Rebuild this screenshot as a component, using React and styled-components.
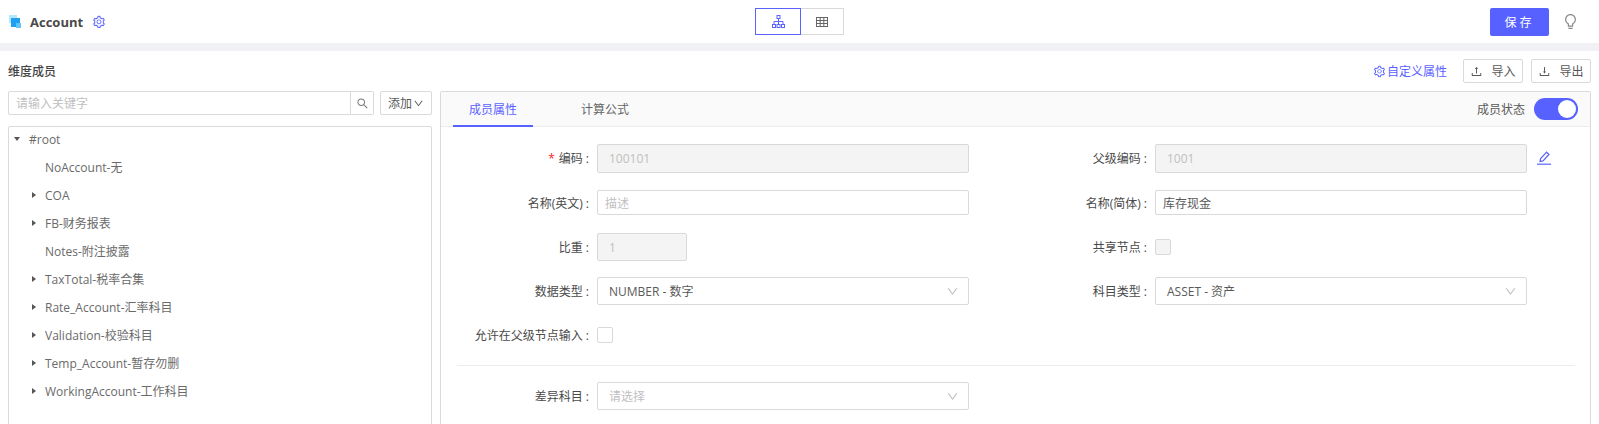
import styled, { createGlobalStyle } from "styled-components";
import { AiOutlineSetting, AiOutlineSearch, AiOutlineUpload, AiOutlineDownload, AiOutlineBulb, AiOutlineDown } from "react-icons/ai";

const GlobalStyle = createGlobalStyle`
  html, body {
    margin: 0;
    height: 100%;
    overflow: hidden;
    background: #fff;
    font-family: "Open Sans", "Noto Sans CJK SC", sans-serif;
    font-size: 12px;
    color: #595959;
  }
  * { box-sizing: border-box; }
`;

const TopBar = styled.header`
  height: 43px;
  display: grid;
  grid-template-columns: 1fr auto 1fr;
  align-items: center;
`;

const TitleBox = styled.div`
  display: flex;
  align-items: center;
  padding-left: 9px;
  > strong {
    margin: 0 9px 0 9px;
    font-size: 13px;
    font-weight: 700;
    color: #4a4a4a;
  }
  > svg:last-child {
    color: #5a62ff;
    font-size: 14px;
  }
`;

const ViewSwitch = styled.div`
  display: flex;
`;

const ViewButton = styled.div`
  width: ${(props) => (props.$active ? "46px" : "43px")};
  height: 27px;
  display: flex;
  align-items: center;
  justify-content: center;
  border: 1px solid ${(props) => (props.$active ? "#5a62ff" : "#d9d9d9")};
  border-left-width: ${(props) => (props.$active ? "1px" : "0")};
  color: ${(props) => (props.$active ? "#5a62ff" : "#666")};
`;

const TopActions = styled.div`
  display: flex;
  align-items: center;
  justify-content: flex-end;
  gap: 13px;
  padding-right: 20px;
  > svg {
    font-size: 17px;
    color: #888;
  }
`;

const SaveButton = styled.button`
  width: 59px;
  height: 28px;
  border: none;
  border-radius: 2px;
  background: #5661ff;
  color: #fff;
  font-family: inherit;
  font-size: 12px;
  letter-spacing: 3px;
`;

const Band = styled.div`
  height: 8px;
  background: #f0f1f5;
`;

const Content = styled.main`
  padding: 8px 8px 0;
`;

const SectionBar = styled.div`
  height: 24px;
  display: flex;
  align-items: center;
  justify-content: space-between;
`;

const SectionTitle = styled.h3`
  margin: 0;
  font-size: 12px;
  font-weight: 500;
  color: #444;
`;

const SectionActions = styled.div`
  display: flex;
  align-items: center;
  gap: 8px;
`;

const CustomLink = styled.a`
  display: flex;
  align-items: center;
  gap: 1px;
  margin-right: 8px;
  color: #5a62ff;
  font-size: 12px;
`;

const OutlineButton = styled.div`
  width: 60px;
  height: 24px;
  display: flex;
  align-items: center;
  justify-content: center;
  gap: 8px;
  border: 1px solid #d9d9d9;
  border-radius: 2px;
  font-size: 12px;
  color: #595959;
`;

const Columns = styled.div`
  display: grid;
  grid-template-columns: 424px minmax(0, 1fr);
  gap: 8px;
  margin-top: 8px;
`;

const LeftColumn = styled.section`
  display: flex;
  flex-direction: column;
  gap: 11px;
`;

const SearchRow = styled.div`
  display: flex;
  align-items: stretch;
  height: 24px;
`;

const SearchInput = styled.div`
  width: 343px;
  display: flex;
  align-items: center;
  padding-left: 7px;
  border: 1px solid #d9d9d9;
  border-radius: 2px 0 0 2px;
  color: #bfbfbf;
`;

const SearchButton = styled.div`
  width: 23px;
  display: flex;
  align-items: center;
  justify-content: center;
  border: 1px solid #d9d9d9;
  border-left: none;
  border-radius: 0 2px 2px 0;
  color: #777;
  font-size: 13px;
`;

const AddButton = styled.div`
  width: 52px;
  margin-left: 6px;
  display: flex;
  align-items: center;
  justify-content: center;
  gap: 1px;
  border: 1px solid #d9d9d9;
  border-radius: 2px;
`;

const TreeBox = styled.div`
  height: 340px;
  border: 1px solid #d9d9d9;
  border-radius: 2px;
`;

const TreeRow = styled.div`
  height: 28px;
  display: flex;
  align-items: center;
  padding-left: ${(props) => (props.$root ? "5px" : "22px")};
  padding-bottom: 4px;
  color: #6a6a6a;
`;

const Caret = styled.span`
  width: ${(props) => (props.$open ? "15px" : "14px")};
  height: 8px;
  flex: none;
  display: flex;
  align-items: center;
  justify-content: flex-start;
  &::before {
    content: "";
    display: ${(props) => (props.$none ? "none" : "block")};
    width: 0;
    height: 0;
    margin-left: ${(props) => (props.$open ? "0" : "1px")};
    border-style: solid;
    border-color: transparent;
    ${(props) =>
      props.$open
        ? "border-width: 4px 3px 0 3px; border-top-color: #555;"
        : "border-width: 3px 0 3px 4px; border-left-color: #555;"}
  }
`;

const Panel = styled.section`
  height: 350px;
  border: 1px solid #d9d9d9;
  border-radius: 2px;
`;

const PanelHead = styled.div`
  height: 35px;
  display: flex;
  align-items: flex-end;
  justify-content: space-between;
  padding: 0 12px;
  background: #fafafa;
  border-bottom: 1px solid #ececec;
`;

const Tabs = styled.div`
  display: flex;
  gap: 32px;
  border-bottom: 1px solid #ececec;
  margin-bottom: -1px;
`;

const Tab = styled.div`
  height: 35px;
  display: flex;
  align-items: center;
  padding: 0 16px;
  margin-bottom: -1px;
  border-bottom: 2px solid ${(props) => (props.$active ? "#5661ff" : "transparent")};
  color: ${(props) => (props.$active ? "#5a62ff" : "#666")};
`;

const StatusBox = styled.div`
  height: 34px;
  display: flex;
  align-items: center;
  gap: 9px;
`;

const SwitchTrack = styled.div`
  width: 44px;
  height: 22px;
  display: flex;
  align-items: center;
  justify-content: flex-end;
  padding-right: 2px;
  border-radius: 11px;
  background: #5661ff;
  &::after {
    content: "";
    width: 18px;
    height: 18px;
    border-radius: 50%;
    background: #fff;
  }
`;

const FormBody = styled.div`
  padding-top: 9px;
`;

const FormRow = styled.div`
  height: ${(props) => props.$h || 44}px;
  display: grid;
  grid-template-columns: 148px 380px 178px 380px 1fr;
  align-items: center;
`;

const Label = styled.label`
  grid-column: ${(props) => props.$col || 1};
  text-align: right;
  white-space: nowrap;
  color: #4a4a4a;
  &::after {
    content: ":";
    margin-left: 3px;
  }
  > i {
    font-style: normal;
    color: #f5222d;
    margin-right: 4px;
  }
`;

const Control = styled.div`
  margin-left: 8px;
  width: ${(props) => props.$width || "auto"};
`;

const TextField = styled.div`
  height: ${(props) => props.$h || 25}px;
  display: flex;
  align-items: center;
  padding-left: ${(props) => (props.$disabled ? "11px" : "7px")};
  border: 1px solid #d9d9d9;
  border-radius: 2px;
  background: ${(props) => (props.$disabled ? "#f4f4f4" : "#fff")};
  color: ${(props) => (props.$muted ? "#bfbfbf" : "#595959")};
`;

const SelectField = styled.div`
  height: 28px;
  display: flex;
  align-items: center;
  justify-content: space-between;
  padding: 0 9px 0 11px;
  border: 1px solid #d9d9d9;
  border-radius: 2px;
  color: ${(props) => (props.$muted ? "#bfbfbf" : "#595959")};
  > svg {
    color: #bfbfbf;
    font-size: 13px;
  }
`;

const CheckBox = styled.div`
  width: 16px;
  height: 16px;
  border: 1px solid #d9d9d9;
  border-radius: 2px;
  background: ${(props) => (props.$disabled ? "#f4f4f4" : "#fff")};
`;

const EditIconBox = styled.div`
  display: flex;
  margin-left: 10px;
  color: #5a62ff;
`;

const Divider = styled.hr`
  margin: 8px 15px 8px 16px;
  border: none;
  border-top: 1px solid #ececec;
`;

const LogoIcon = () => (
  <svg width="12" height="13" viewBox="0 0 12 13">
    <rect x="0" y="0" width="8" height="8" fill="#b3e8fc" />
    <rect x="2" y="3" width="9" height="9" fill="#1f9ff0" />
    <rect x="7" y="8" width="5" height="5" fill="#5cc6fa" />
  </svg>
);

const TreeIcon = () => (
  <svg width="13" height="13" viewBox="0 0 13 13" fill="none" stroke="currentColor">
    <rect x="5" y="0.5" width="3" height="3" />
    <rect x="0.5" y="9.5" width="3" height="3" />
    <rect x="5" y="9.5" width="3" height="3" />
    <rect x="9.5" y="9.5" width="3" height="3" />
    <path d="M6.5 3.5V9.5M2 9.5V6.5H11V9.5" />
  </svg>
);

const TableIcon = () => (
  <svg width="12" height="10" viewBox="0 0 12 10" fill="none" stroke="currentColor">
    <rect x="0.5" y="0.5" width="11" height="9" />
    <path d="M4.2 0.5V9.5M7.8 0.5V9.5M0.5 3.5H11.5M0.5 6.5H11.5" />
  </svg>
);

const EditIcon = () => (
  <svg width="14" height="14" viewBox="0 0 14 14" fill="none" stroke="currentColor" strokeWidth="1.2">
    <path d="M3 10.5L3.6 7.6L9.6 1.2L12 3.5L6 9.9Z" />
    <path d="M0 13.2H14" />
  </svg>
);

const treeItems = [
  { text: "NoAccount-无" },
  { text: "COA", more: true },
  { text: "FB-财务报表", more: true },
  { text: "Notes-附注披露" },
  { text: "TaxTotal-税率合集", more: true },
  { text: "Rate_Account-汇率科目", more: true },
  { text: "Validation-校验科目", more: true },
  { text: "Temp_Account-暂存勿删", more: true },
  { text: "WorkingAccount-工作科目", more: true },
];

const App = () => (
  <>
    <GlobalStyle />
    <TopBar>
      <TitleBox>
        <LogoIcon />
        <strong>Account</strong>
        <AiOutlineSetting />
      </TitleBox>
      <ViewSwitch>
        <ViewButton $active>
          <TreeIcon />
        </ViewButton>
        <ViewButton>
          <TableIcon />
        </ViewButton>
      </ViewSwitch>
      <TopActions>
        <SaveButton>保存</SaveButton>
        <AiOutlineBulb />
      </TopActions>
    </TopBar>
    <Band />
    <Content>
      <SectionBar>
        <SectionTitle>维度成员</SectionTitle>
        <SectionActions>
          <CustomLink>
            <AiOutlineSetting size={13} />
            自定义属性
          </CustomLink>
          <OutlineButton>
            <AiOutlineUpload size={13} />
            导入
          </OutlineButton>
          <OutlineButton>
            <AiOutlineDownload size={13} />
            导出
          </OutlineButton>
        </SectionActions>
      </SectionBar>
      <Columns>
        <LeftColumn>
          <SearchRow>
            <SearchInput>请输入关键字</SearchInput>
            <SearchButton>
              <AiOutlineSearch />
            </SearchButton>
            <AddButton>
              添加
              <AiOutlineDown size={11} />
            </AddButton>
          </SearchRow>
          <TreeBox>
            <TreeRow $root>
              <Caret $open />
              #root
            </TreeRow>
            {treeItems.map((item) => (
              <TreeRow key={item.text}>
                <Caret $none={!item.more} />
                {item.text}
              </TreeRow>
            ))}
          </TreeBox>
        </LeftColumn>
        <Panel>
          <PanelHead>
            <Tabs>
              <Tab $active>成员属性</Tab>
              <Tab>计算公式</Tab>
            </Tabs>
            <StatusBox>
              成员状态
              <SwitchTrack />
            </StatusBox>
          </PanelHead>
          <FormBody>
            <FormRow>
              <Label>
                <i>*</i>编码
              </Label>
              <Control>
                <TextField $disabled $muted $h={29}>100101</TextField>
              </Control>
              <Label $col={3}>父级编码</Label>
              <Control>
                <TextField $disabled $muted $h={29}>1001</TextField>
              </Control>
              <EditIconBox>
                <EditIcon />
              </EditIconBox>
            </FormRow>
            <FormRow $h={45}>
              <Label>名称(英文)</Label>
              <Control>
                <TextField $muted>描述</TextField>
              </Control>
              <Label $col={3}>名称(简体)</Label>
              <Control>
                <TextField>库存现金</TextField>
              </Control>
            </FormRow>
            <FormRow>
              <Label>比重</Label>
              <Control $width="90px">
                <TextField $disabled $muted $h={28}>1</TextField>
              </Control>
              <Label $col={3}>共享节点</Label>
              <Control>
                <CheckBox $disabled />
              </Control>
            </FormRow>
            <FormRow>
              <Label>数据类型</Label>
              <Control>
                <SelectField>
                  NUMBER - 数字
                  <AiOutlineDown />
                </SelectField>
              </Control>
              <Label $col={3}>科目类型</Label>
              <Control>
                <SelectField>
                  ASSET - 资产
                  <AiOutlineDown />
                </SelectField>
              </Control>
            </FormRow>
            <FormRow>
              <Label>允许在父级节点输入</Label>
              <Control>
                <CheckBox />
              </Control>
            </FormRow>
          </FormBody>
          <Divider />
          <FormRow>
            <Label>差异科目</Label>
            <Control>
              <SelectField $muted>
                请选择
                <AiOutlineDown />
              </SelectField>
            </Control>
          </FormRow>
        </Panel>
      </Columns>
    </Content>
  </>
);

export default App;
